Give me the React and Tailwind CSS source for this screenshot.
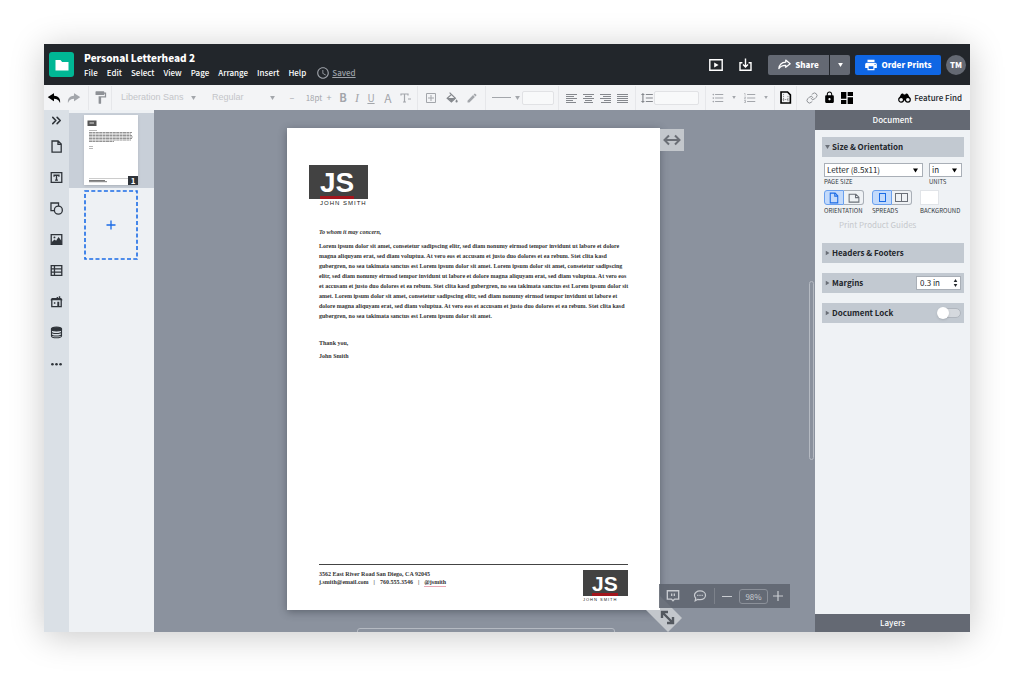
import { useState } from 'react';
import clsx from 'clsx';
import { ChevronsRight, Link as LinkIcon } from 'lucide-react';
import { IoIosUndo, IoIosRedo } from 'react-icons/io';
import {
  MdAccessTime,
  MdCreate,
  MdDashboard,
  MdFormatLineSpacing,
  MdFormatListBulleted,
  MdFormatListNumbered,
  MdFormatPaint,
  MdLock,
  MdPrint,
} from 'react-icons/md';

const MENU = ['File', 'Edit', 'Select', 'View', 'Page', 'Arrange', 'Insert', 'Help'];

const BODY_LINES = [
  'Lorem ipsum dolor sit amet, consetetur sadipscing elitr, sed diam nonumy eirmod tempor invidunt ut labore et dolore',
  'magna aliquyam erat, sed diam voluptua. At vero eos et accusam et justo duo dolores et ea rebum. Stet clita kasd',
  'gubergren, no sea takimata sanctus est Lorem ipsum dolor sit amet. Lorem ipsum dolor sit amet, consetetur sadipscing',
  'elitr, sed diam nonumy eirmod tempor invidunt ut labore et dolore magna aliquyam erat, sed diam voluptua. At vero eos',
  'et accusam et justo duo dolores et ea rebum. Stet clita kasd gubergren, no sea takimata sanctus est Lorem ipsum dolor sit',
  'amet. Lorem ipsum dolor sit amet, consetetur sadipscing elitr, sed diam nonumy eirmod tempor invidunt ut labore et',
  'dolore magna aliquyam erat, sed diam voluptua. At vero eos et accusam et justo duo dolores et ea rebum. Stet clita kasd',
  'gubergren, no sea takimata sanctus est Lorem ipsum dolor sit amet.',
];

function Svg({ className = 'size-4', children, ...rest }) {
  return (
    <svg
      viewBox="0 0 16 16"
      className={className}
      fill="none"
      stroke="currentColor"
      strokeWidth="1.6"
      aria-hidden="true"
      {...rest}
    >
      {children}
    </svg>
  );
}

function Caret({ className }) {
  return (
    <svg viewBox="0 0 6 5" className={clsx('shrink-0', className)} aria-hidden="true">
      <path d="M0 0h6L3 5z" fill="currentColor" />
    </svg>
  );
}

function Divider({ className }) {
  return <span className={clsx('h-6 w-px shrink-0 bg-[#e6e7ea]', className)} />;
}

function ToolButton({ label, className, children }) {
  return (
    <button
      type="button"
      aria-label={label}
      className={clsx('flex h-6 shrink-0 items-center justify-center', className)}
    >
      {children}
    </button>
  );
}

function AlignIcon({ rows }) {
  return (
    <Svg className="h-3 w-[11px]" viewBox="0 0 11 12" strokeWidth="1" shapeRendering="crispEdges">
      {rows.map(([x, w], i) => (
        <path key={i} d={`M${x} ${2.5 + i * 2}h${w}`} />
      ))}
    </Svg>
  );
}

const ALIGNS = [
  { label: 'Align left', rows: [[0, 11], [0, 8], [0, 11], [0, 7], [0, 10]] },
  { label: 'Align center', rows: [[0, 11], [2, 7], [0, 11], [2, 7], [1, 9]] },
  { label: 'Align right', rows: [[0, 11], [3, 8], [0, 11], [4, 7], [1, 10]] },
  { label: 'Justify', rows: [[0, 11], [0, 11], [0, 11], [0, 11], [0, 11]] },
];

const RAIL = [
  {
    label: 'Pages',
    icon: <path d="M2.500 1.200h7.500L13.800 5v9.800H2.500zM9.800 1.200V5.300h4" />,
  },
  {
    label: 'Text',
    icon: <path d="M1.5 2h13v12h-13zM5 7V5.2h6V7M8 5.2v6M6.2 11.2h3.6" />,
  },
  {
    label: 'Shapes',
    icon: (
      <>
        <path d="M5.5 10.5H1.2V1.2h9.3v3.6" />
        <circle cx="10.3" cy="10" r="4.9" />
      </>
    ),
  },
  {
    label: 'Images',
    icon: (
      <>
        <path d="M1.5 2h13v12h-13z" />
        <path d="M2 11.5 5.5 8l2 1.5 3-4.5 4 5v4H2z" fill="currentColor" stroke="none" />
        <circle cx="5.5" cy="5.4" r="1.2" fill="currentColor" stroke="none" />
      </>
    ),
  },
  {
    label: 'Tables',
    icon: <path d="M1.5 2h13v12h-13zM5.5 2v12M1.5 6h13M1.5 10h13" />,
  },
  {
    label: 'Brand assets',
    icon: (
      <>
        <path d="M2.200 6v8.400h11.600V6" />
        <path d="M.4 6.400 2.200 3.800h6V2.400h1.600v1.400h1V1.600h1.800v2.200h1.200l1.800 2.600z" fill="currentColor" stroke="none" />
        <path d="M9 8.400h2.400v6H9zM4.800 9h1.800v1.800H4.800z" fill="currentColor" stroke="none" />
      </>
    ),
  },
  {
    label: 'Data',
    icon: (
      <>
        <ellipse cx="8" cy="3.8" rx="6.2" ry="2.3" fill="currentColor" />
        <path
          d="M1.8 3.8v8.400c0 1.300 2.800 2.300 6.200 2.300s6.200-1 6.200-2.300V3.800M1.800 7c0 1.300 2.800 2.300 6.200 2.300s6.200-1 6.200-2.300M1.800 10c0 1.300 2.800 2.300 6.200 2.300s6.200-1 6.200-2.300"
          strokeWidth="1.300"
        />
      </>
    ),
  },
  {
    label: 'More',
    icon: (
      <g fill="currentColor" stroke="none">
        <circle cx="3" cy="9" r="1.600" />
        <circle cx="8" cy="9" r="1.600" />
        <circle cx="13" cy="9" r="1.600" />
      </g>
    ),
  },
];

function Header() {
  return (
    <header className="flex h-[41px] shrink-0 items-center bg-[#22262b] pl-[5px] pr-1 text-white">
      <a href="#home" aria-label="Projects" className="flex size-[25px] items-center justify-center rounded-[3px] bg-[#00b795]">
        <svg viewBox="0 0 14 12" className="h-3 w-[14px]" aria-hidden="true">
          <path d="M.5 1h5l1.6 2h6.4v8.5H.5z" fill="#fff" />
        </svg>
      </a>
      <div className="ml-[10px] flex flex-col gap-[2px] pt-[2px]">
        <h1 className="text-[10px] leading-3 font-black">Personal Letterhead 2</h1>
        <nav className="flex items-center gap-[9px] text-[8px] leading-3 font-medium">
          {MENU.map((m) => (
            <button key={m} type="button">
              {m}
            </button>
          ))}
          <span className="ml-[1px] flex items-center gap-[2px] text-[#9da1a8]">
            <MdAccessTime className="size-[14px]" />
            <a href="#saved" className="underline">
              Saved
            </a>
          </span>
        </nav>
      </div>
      <div className="ml-auto flex items-center">
        <button type="button" aria-label="Present" className="mr-4">
          <Svg className="size-[14px]" viewBox="0 0 14 14" strokeWidth="1.4">
            <path d="M.8 1.8h12.4v10.4H.8z" />
            <path d="M5.2 4.4v5.2L9.6 7z" fill="currentColor" stroke="none" />
          </Svg>
        </button>
        <button type="button" aria-label="Download" className="mr-4">
          <Svg className="size-[13px]" viewBox="0 0 13 13" strokeWidth="1.4">
            <path d="M3.4 4.8H1v7.4h11V4.8H9.6M6.5.6v8M4 6.4l2.5 2.5L9 6.4" />
          </Svg>
        </button>
        <div className="mr-[5px] flex h-5 gap-px">
          <button type="button" className="flex w-[61px] items-center justify-center gap-1 rounded-l-[2px] bg-[#646973] text-[8px] font-black">
            <Svg className="size-[13px]" strokeWidth="1.5" strokeLinejoin="round">
              <path d="M9.5 2.5 15 7l-5.5 4.5V9C5.5 8.800 3 10 1 13c.5-4 3-7.600 8.500-8z" />
            </Svg>
            Share
          </button>
          <button type="button" aria-label="Share options" className="flex w-5 items-center justify-center rounded-r-[2px] bg-[#646973]">
            <Caret className="h-1 w-[5px]" />
          </button>
        </div>
        <button type="button" className="mr-[5px] flex h-5 w-[86px] items-center justify-center gap-[3px] rounded-[2px] bg-[#0f66e4] text-[8px] font-black">
          <MdPrint className="size-[14px]" />
          Order Prints
        </button>
        <button type="button" className="flex size-5 items-center justify-center rounded-full bg-[#646973] text-[8px] font-black">
          TM
        </button>
      </div>
    </header>
  );
}

function Toolbar() {
  return (
    <div className="flex h-[25px] shrink-0 items-center overflow-hidden bg-[#f3f4f6] text-[#a3a6ab]">
      <ToolButton label="Undo" className="w-5 text-black">
        <IoIosUndo className="size-[14px]" />
      </ToolButton>
      <ToolButton label="Redo" className="w-5">
        <IoIosRedo className="size-[14px]" />
      </ToolButton>
      <Divider className="ml-1" />
      <ToolButton label="Copy format" className="w-[22px] text-[#8e9196]">
        <MdFormatPaint className="size-[15px]" />
      </ToolButton>
      <Divider />
      <div className="relative flex w-[92px] shrink-0 items-center">
        <select aria-label="Font" className="h-4 w-full appearance-none bg-transparent pl-[9px] font-['Liberation_Sans',sans-serif] text-[9px] text-[#c3c5c9]">
          <option>Liberation Sans</option>
        </select>
        <Caret className="pointer-events-none absolute right-2 h-1 w-[5px]" />
      </div>
      <div className="relative flex w-[77px] shrink-0 items-center">
        <select aria-label="Font style" className="h-4 w-full appearance-none bg-transparent pl-2 font-['Liberation_Sans',sans-serif] text-[9px] text-[#c3c5c9]">
          <option>Regular</option>
        </select>
        <Caret className="pointer-events-none absolute right-[6px] h-1 w-[5px]" />
      </div>
      <ToolButton label="Decrease size" className="w-[22px] text-[9px]">–</ToolButton>
      <input aria-label="Font size" defaultValue="18pt" className="h-4 w-[22px] shrink-0 bg-transparent text-center text-[8px] outline-none" />
      <ToolButton label="Increase size" className="mr-[3px] w-2 text-[9px]">+</ToolButton>
      <ToolButton label="Bold" className="w-[14px] text-[11px] font-bold">B</ToolButton>
      <ToolButton label="Italic" className="w-[14px] font-['Liberation_Serif',serif] text-[12px] italic">I</ToolButton>
      <ToolButton label="Underline" className="w-[14px] text-[10px] underline">U</ToolButton>
      <ToolButton label="Text color" className="w-5 text-[12px]">A</ToolButton>
      <ToolButton label="Text style" className="w-[15px]">
        <Svg className="size-3" viewBox="0 0 12 12" strokeWidth="1.2">
          <path d="M1 3.500V2h7v1.500M4.500 2v8M3 10h3M8 7h3" />
        </Svg>
      </ToolButton>
      <Divider className="ml-1" />
      <ToolButton label="Borders" className="ml-[3px] w-5">
        <Svg className="size-[10px]" viewBox="0 0 10 10" strokeWidth="1">
          <path d="M.5.5h9v9h-9zM5 2v6M2 5h6" />
        </Svg>
      </ToolButton>
      <ToolButton label="Fill color" className="w-[22px] text-[#85888d]">
        <Svg className="size-3" viewBox="0 0 12 12" strokeWidth="1.200">
          <path d="M3.600.6 9.400 6.200 5.400 10 1.200 6.200 5.600 2.400" />
          <path d="M1.400 6h8L5.400 9.800z" fill="currentColor" stroke="none" />
          <path d="M10.600 7.200c.7 1 1.100 1.600 1.100 2.200a1.100 1.100 0 0 1-2.200 0c0-.6.4-1.200 1.100-2.200z" fill="currentColor" stroke="none" />
        </Svg>
      </ToolButton>
      <ToolButton label="Line color" className="w-[18px]">
        <MdCreate className="size-3" />
      </ToolButton>
      <Divider className="ml-1" />
      <ToolButton label="Line style" className="ml-[6px] w-[28px] gap-1">
        <span className="h-px w-[19px] bg-current" />
        <Caret className="h-1 w-[5px]" />
      </ToolButton>
      <input aria-label="Line width" className="ml-[2px] h-[14px] w-8 shrink-0 rounded-[2px] border border-[#e1e2e5] bg-[#f8f9fa]" />
      <Divider className="ml-1" />
      <div className="ml-1 flex text-[#85888d]">
        {ALIGNS.map((a) => (
          <ToolButton key={a.label} label={a.label} className="w-[17px]">
            <AlignIcon rows={a.rows} />
          </ToolButton>
        ))}
      </div>
      <Divider className="ml-1" />
      <ToolButton label="Line spacing" className="ml-1 w-[14px] text-[#85888d]">
        <MdFormatLineSpacing className="size-[14px]" />
      </ToolButton>
      <input aria-label="Line height" className="h-[14px] w-[45px] shrink-0 rounded-[2px] border border-[#e1e2e5] bg-[#f8f9fa]" />
      <Divider className="ml-[6px]" />
      <ToolButton label="Bulleted list" className="ml-1 w-4">
        <MdFormatListBulleted className="size-[14px]" />
      </ToolButton>
      <ToolButton label="Bullet options" className="w-4">
        <Caret className="h-[3px] w-1" />
      </ToolButton>
      <ToolButton label="Numbered list" className="w-4">
        <MdFormatListNumbered className="size-[14px]" />
      </ToolButton>
      <ToolButton label="Numbering options" className="w-4">
        <Caret className="h-[3px] w-1" />
      </ToolButton>
      <Divider />
      <ToolButton label="Page grid" className="w-[21px] text-black">
        <Svg className="size-[13px]" strokeWidth="2">
          <path d="M2.500 1.200h8l3.500 3.600v10H2.500z" />
          <path d="M4.500 10.500h8M5.600 3.500v10M11 6v8" strokeWidth="1" strokeDasharray="1.500 1" stroke="#777" />
        </Svg>
      </ToolButton>
      <Divider />
      <ToolButton label="Link" className="ml-[7px] w-4 text-[#8e9196]">
        <LinkIcon className="size-3" />
      </ToolButton>
      <ToolButton label="Lock" className="w-[18px] text-black">
        <MdLock className="size-[13px]" />
      </ToolButton>
      <ToolButton label="Arrange objects" className="w-[18px] text-black">
        <MdDashboard className="size-4" />
      </ToolButton>
      <button type="button" className="mr-2 ml-auto flex shrink-0 items-center gap-[3px] text-[8px] font-medium text-[#22262b]">
        <svg viewBox="0 0 26 20" className="h-[10px] w-[13px] text-black" aria-hidden="true">
          <path
            d="M6 2.500C7.500.5 11 .8 11.500 3h3C15 .8 18.500.5 20 2.500l5 9.500-9 3h-6l-9-3z"
            fill="currentColor"
          />
          <g fill="#f3f4f6" stroke="currentColor" strokeWidth="2.400">
            <circle cx="6.300" cy="13.500" r="4.800" />
            <circle cx="19.700" cy="13.500" r="4.800" />
          </g>
        </svg>
        Feature Find
      </button>
    </div>
  );
}

function ToolRail() {
  return (
    <aside className="flex w-[25px] shrink-0 flex-col bg-[#dae0e6] text-[#2f343a]">
      <button type="button" aria-label="Expand" className="flex h-[21px] items-center justify-center">
        <ChevronsRight className="size-[15px]" strokeWidth={2.5} />
      </button>
      {RAIL.map((r) => (
        <button key={r.label} type="button" aria-label={r.label} className="flex h-[31px] items-center justify-center">
          <Svg className="size-[13px]">{r.icon}</Svg>
        </button>
      ))}
    </aside>
  );
}

function PagesPanel() {
  return (
    <aside className="flex w-[85px] shrink-0 flex-col bg-[#eef1f4] pt-[3px]">
      <div className="bg-[#c8cfd8] pt-[2px] pb-[3px] pl-[15px]">
        <button type="button" className="relative block h-[70px] w-[54px] bg-white shadow">
          <svg viewBox="0 0 54 70" className="size-full" aria-hidden="true">
            <rect x="3.500" y="5.500" width="9" height="5.500" fill="#555" />
            <path d="M5.500 8h4.500" stroke="#bbb" strokeWidth="1.400" />
            <path d="M5 15.500h8M5 31.500h4M5 33.500h4" stroke="#999" strokeWidth=".7" />
            <path
              d="M5 17.500h43M5 19h42M5 20.500h43M5 22h44M5 23.500h43M5 25h42M5 26.500h25"
              stroke="#888"
              strokeWidth=".9"
              strokeDasharray="3 .4"
            />
            <path d="M5 63.500h44" stroke="#999" strokeWidth=".5" />
            <path d="M5 65.500h16M5 66.700h18" stroke="#555" strokeWidth=".8" />
          </svg>
          <span className="absolute right-0 bottom-0 flex h-[9px] w-[10px] items-center justify-center bg-[#2f343a] text-[8px] leading-none font-bold text-white">
            1
          </span>
        </button>
      </div>
      <button
        type="button"
        aria-label="Add page"
        className="mt-[2px] ml-[15px] flex h-[70px] w-[54px] items-center justify-center text-[#1a6be6]"
      >
        <svg viewBox="0 0 54 70" className="size-full" aria-hidden="true" fill="none" stroke="currentColor">
          <rect x="1" y="1" width="52" height="68" strokeWidth="1.6" strokeDasharray="4 2.300" />
          <path d="M22.500 35h9M27 30.500v9" strokeWidth="1.3" />
        </svg>
      </button>
    </aside>
  );
}

function Logo({ small }) {
  return (
    <div className="flex flex-col font-['Liberation_Sans',sans-serif] font-normal">
      <div
        className={clsx(
          'flex flex-col items-start justify-end bg-[#424242] font-bold text-white',
          small ? 'h-[26px] w-[45px] pl-[9px]' : 'h-[34px] w-[59px] pl-[11px]',
        )}
      >
        <span className={small ? 'text-[21px] leading-[19px]' : 'text-[28px] leading-[26px]'}>JS</span>
        <span className={clsx('bg-[#a3161d]', small ? 'h-[3px] w-[26px]' : 'h-[3px] w-[34px]')} />
      </div>
      <span
        className={clsx(
          'whitespace-nowrap text-[#222]',
          small
            ? 'text-[4px] leading-[7px] tracking-[1px]'
            : 'pl-[11px] text-[6px] leading-[9px] tracking-[1px]',
        )}
      >
        JOHN SMITH
      </span>
    </div>
  );
}

function LetterPage() {
  return (
    <div className="relative w-[373px] shrink-0">
      <button type="button" aria-label="Resize width" className="absolute top-0 left-full mt-px flex h-[22px] w-6 items-center justify-center bg-[#c3c7cc] text-[#6b6f76]">
        <Svg className="h-3 w-[18px]" viewBox="0 0 18 12" strokeWidth="2">
          <path d="M2 6h14M6 1.500 1.500 6 6 10.500M12 1.500 16.500 6 12 10.500" />
        </Svg>
      </button>
      <button type="button" aria-label="Resize page" className="absolute -right-[22px] -bottom-[22px] size-9">
        <svg viewBox="0 0 36 36" className="size-full" aria-hidden="true">
          <path d="M14 0l22 22-14 14L0 14h14z" fill="#c3c7cc" />
          <path d="M17 17l9 9M16 22v-6h6M27 21v6h-6" fill="none" stroke="#53585f" strokeWidth="2.400" />
        </svg>
      </button>
      <article className="flex h-[482px] flex-col bg-white pt-[37px] pr-8 pb-[7px] pl-8 font-['Liberation_Serif',serif] text-[6px] leading-[10px] font-bold text-[#333] shadow-[0_2px_8px_rgba(40,45,55,0.45)]">
        <div className="-ml-[10px]">
          <Logo />
        </div>
        <p className="mt-[19px] italic">To whom it may concern,</p>
        <p className="mt-1">
          {BODY_LINES.map((line) => (
            <span key={line} className="block whitespace-nowrap">
              {line}
            </span>
          ))}
        </p>
        <p className="mt-[17px]">Thank you,</p>
        <p className="mt-[3px]">John Smith</p>
        <footer className="mt-auto flex items-start justify-between border-t border-[#444] pt-[5px]">
          <address className="leading-2 not-italic">
            3562 East River Road San Diego, CA 92045
            <span className="flex gap-[5px]">
              <span>j.smith@email.com</span>
              <span>|</span>
              <span>760.555.3546</span>
              <span>|</span>
              <span className="border-b border-[#e9a7b4]">@jsmith</span>
            </span>
          </address>
          <Logo small />
        </footer>
      </article>
    </div>
  );
}

function ZoomBar() {
  return (
    <div className="absolute right-[25px] bottom-6 flex h-6 w-[131px] items-center bg-[#5d636d]/85 text-[#c9ccd1]">
      <button type="button" aria-label="Notes" className="flex w-[27px] items-center justify-center">
        <Svg className="size-[14px]" strokeWidth="1.5">
          <path d="M1.500 2h13v9.500H9.800L8 13.500l-1.800-2H1.500zM6.500 5v3M9.500 5v3" />
        </Svg>
      </button>
      <button type="button" aria-label="Comments" className="flex w-7 items-center justify-center">
        <Svg className="size-[14px]" strokeWidth="1.400">
          <path d="M8 2.200c3.600 0 6.300 2.100 6.300 5s-2.700 5-6.300 5c-.9 0-1.700-.1-2.500-.4L2.500 13.500l.6-3.100C2.200 9.500 1.700 8.400 1.700 7.200c0-2.900 2.700-5 6.300-5z" />
          <path d="M4.800 7.200h1.400M7.300 7.200h1.400M9.800 7.200h1.400" />
        </Svg>
      </button>
      <span className="h-4 w-px bg-[#7d828b]" />
      <button type="button" aria-label="Zoom out" className="flex w-6 items-center justify-center">
        <span className="h-px w-[10px] bg-current" />
      </button>
      <input
        aria-label="Zoom"
        defaultValue="98%"
        className="h-[15px] w-[29px] rounded-[3px] border border-[#8c919a] bg-transparent text-center text-[8px] outline-none"
      />
      <button type="button" aria-label="Zoom in" className="flex w-5 items-center justify-center">
        <Svg className="size-[10px]" viewBox="0 0 10 10" strokeWidth="1.200">
          <path d="M0 5h10M5 0v10" />
        </Svg>
      </button>
    </div>
  );
}

function Canvas() {
  return (
    <main className="relative flex min-w-0 flex-1 items-start justify-center overflow-hidden bg-[#8b929e] pt-[18px] pr-[22px]">
      <LetterPage />
      <ZoomBar />
      <span className="absolute top-[171px] right-px h-[179px] w-[5px] rounded-full border border-[#b5bac2]" />
      <span className="absolute -bottom-px left-[203px] h-[5px] w-[258px] rounded-t-[3px] border border-[#b5bac2]" />
    </main>
  );
}

function Section({ title, open, children }) {
  return (
    <div className="flex h-5 items-center bg-[#c2c9d1] pr-[3px]">
      <button type="button" aria-expanded={!!open} className="flex flex-1 items-center text-[8px] font-bold">
        <span className="flex w-[10px] justify-center text-[#6b7078]">
          <Caret className={clsx('h-1 w-[5px]', !open && '-rotate-90')} />
        </span>
        {title}
      </button>
      {children}
    </div>
  );
}

const fieldLabel = 'text-[6px] leading-2 text-[#33383e]';

function ToggleButton({ active, label, onClick, children, className }) {
  return (
    <button
      type="button"
      aria-label={label}
      aria-pressed={active}
      onClick={onClick}
      className={clsx(
        'flex h-[15px] w-5 items-center justify-center border',
        active ? 'border-[#6aa0ee] bg-[#c3dafb] text-[#1a6be6]' : 'border-[#a9afb7] text-[#6b7078]',
        className,
      )}
    >
      {children}
    </button>
  );
}

function DocumentPanel() {
  const [orientation, setOrientation] = useState('portrait');
  const [spread, setSpread] = useState('single');
  const [locked, setLocked] = useState(false);

  return (
    <aside className="flex w-[155px] shrink-0 flex-col bg-[#eff2f5] text-[#22262b]">
      <h2 className="flex h-5 items-center justify-center bg-[#646973] text-[8px] font-medium text-white">Document</h2>
      <div className="flex flex-col pt-[7px] pr-[6px] pl-[7px]">
        <Section title="Size & Orientation" open />
        <div className="mt-[6px] flex gap-[6px] pl-[2px]">
          <label className="flex w-[99px] flex-col">
            <span className="relative flex items-center">
              <select className="h-[14px] w-full appearance-none border border-[#a9afb7] bg-white pl-[2px] text-[8px] leading-3">
                <option>Letter (8.5x11)</option>
              </select>
              <Caret className="pointer-events-none absolute right-[5px] h-[5px] w-[5px] text-black" />
            </span>
            <span className={clsx(fieldLabel, 'mt-[1px]')}>PAGE SIZE</span>
          </label>
          <label className="flex w-[33px] flex-col">
            <span className="relative flex items-center">
              <select className="h-[14px] w-full appearance-none border border-[#a9afb7] bg-white pl-[2px] text-[8px] leading-3">
                <option>in</option>
              </select>
              <Caret className="pointer-events-none absolute right-[5px] h-[5px] w-[5px] text-black" />
            </span>
            <span className={clsx(fieldLabel, 'mt-[1px]')}>UNITS</span>
          </label>
        </div>
        <div className="mt-1 flex gap-2 pl-[2px]">
          <div className="flex w-10 flex-col">
            <div className="flex">
              <ToggleButton
                label="Portrait"
                active={orientation === 'portrait'}
                onClick={() => setOrientation('portrait')}
                className="rounded-l-[3px]"
              >
                <Svg className="size-3" strokeWidth="1.400">
                  <path d="M3 1.500h6.500L13 5v9.500H3zM9 1.500V5.500h4" />
                </Svg>
              </ToggleButton>
              <ToggleButton
                label="Landscape"
                active={orientation === 'landscape'}
                onClick={() => setOrientation('landscape')}
                className="rounded-r-[3px] border-l-0"
              >
                <Svg className="size-3" strokeWidth="1.400">
                  <path d="M1.500 3h9l4 4v6.500h-13zM10 3v4.500h4.500" />
                </Svg>
              </ToggleButton>
            </div>
            <span className={clsx(fieldLabel, 'mt-[2px]')}>ORIENTATION</span>
          </div>
          <div className="flex w-10 flex-col">
            <div className="flex">
              <ToggleButton
                label="Single pages"
                active={spread === 'single'}
                onClick={() => setSpread('single')}
                className="rounded-l-[3px]"
              >
                <span className="h-[9px] w-[7px] border border-current" />
              </ToggleButton>
              <ToggleButton
                label="Facing pages"
                active={spread === 'facing'}
                onClick={() => setSpread('facing')}
                className="rounded-r-[3px] border-l-0"
              >
                <span className="h-[9px] w-[7px] border border-current" />
                <span className="h-[9px] w-[6px] border border-l-0 border-current" />
              </ToggleButton>
            </div>
            <span className={clsx(fieldLabel, 'mt-[2px]')}>SPREADS</span>
          </div>
          <div className="flex flex-col">
            <button type="button" aria-label="Background color" className="h-[15px] w-[19px] border border-[#e1e4e8] bg-white" />
            <span className={clsx(fieldLabel, 'mt-[2px]')}>BACKGROUND</span>
          </div>
        </div>
        <button type="button" disabled className="mt-[5px] ml-[17px] self-start text-[8px] leading-[10px] whitespace-nowrap text-[#c5c8cc]">
          Print Product Guides
        </button>
        <div className="mt-[13px] flex flex-col gap-[10px]">
          <Section title="Headers & Footers" />
          <Section title="Margins">
            <span className="flex h-[14px] w-[45px] items-center border border-[#a9afb7] bg-white pr-[2px] pl-[3px]">
              <input aria-label="Margin size" defaultValue="0.3 in" className="w-full min-w-0 bg-transparent text-[8px] outline-none" />
              <span className="flex flex-col gap-[2px]">
                <Caret className="h-[3px] w-[5px] rotate-180" />
                <Caret className="h-[3px] w-[5px]" />
              </span>
            </span>
          </Section>
          <Section title="Document Lock">
            <button
              type="button"
              role="switch"
              aria-label="Document Lock"
              aria-checked={locked}
              onClick={() => setLocked(!locked)}
              className={clsx(
                'flex h-[10px] w-6 items-center rounded-full border border-[#b0b6be]',
                locked ? 'justify-end bg-[#6aa0ee]' : 'justify-start bg-[#d5d9de]',
              )}
            >
              <span className="-ml-px size-3 shrink-0 rounded-full bg-white shadow" />
            </button>
          </Section>
        </div>
      </div>
      <h2 className="mt-auto flex h-[18px] items-center justify-center bg-[#646973] text-[8px] font-medium text-white">Layers</h2>
    </aside>
  );
}

export default function App() {
  return (
    <div className="flex h-screen flex-col bg-white pt-11 pr-[42px] pb-[43px] pl-11 font-['Noto_Sans_CJK_SC','Open_Sans',sans-serif]">
      <div className="flex min-h-0 flex-1 flex-col shadow-[0_4px_32px_rgba(0,0,0,0.22)]">
        <Header />
        <Toolbar />
        <div className="flex min-h-0 flex-1">
          <ToolRail />
          <PagesPanel />
          <Canvas />
          <DocumentPanel />
        </div>
      </div>
    </div>
  );
}
